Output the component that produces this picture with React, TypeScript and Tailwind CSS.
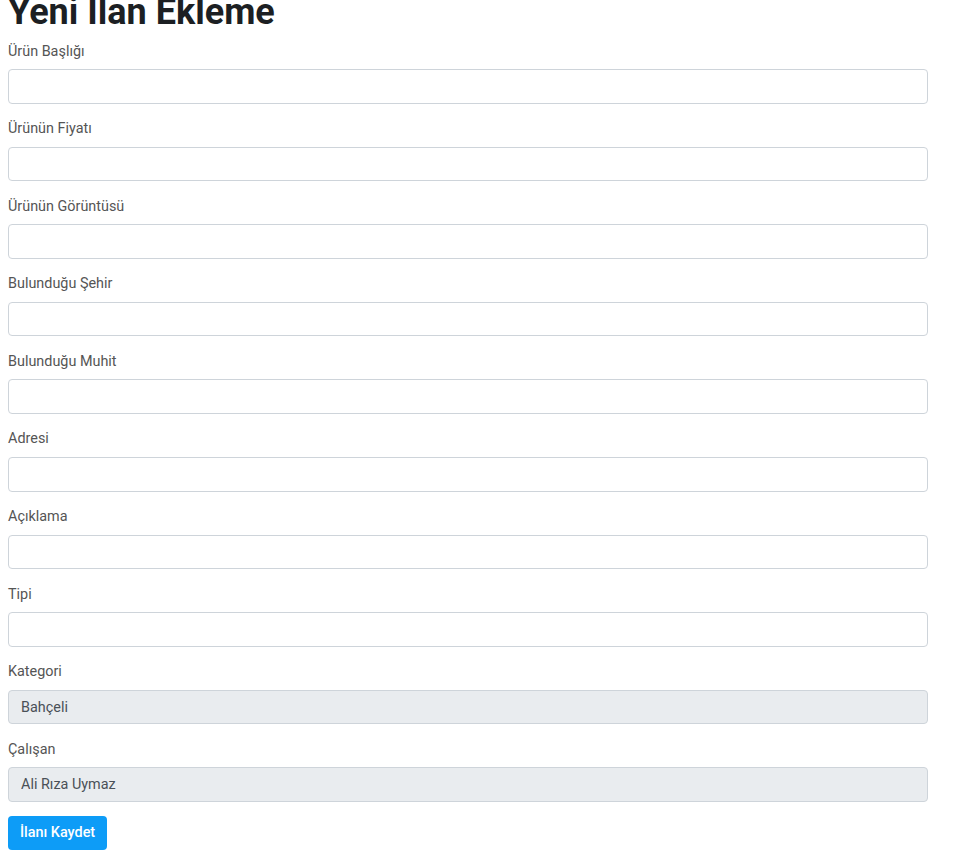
const fields: { label: string; value?: string }[] = [
  { label: "Ürün Başlığı" },
  { label: "Ürünün Fiyatı" },
  { label: "Ürünün Görüntüsü" },
  { label: "Bulunduğu Şehir" },
  { label: "Bulunduğu Muhit" },
  { label: "Adresi" },
  { label: "Açıklama" },
  { label: "Tipi" },
  { label: "Kategori", value: "Bahçeli" },
  { label: "Çalışan", value: "Ali Rıza Uymaz" },
];

export default function App() {
  return (
    <div className="min-h-screen bg-white font-['Roboto',sans-serif] overflow-hidden">
      <div className="w-[920px] ml-2">
        {/* Title */}
        <h1 className="text-[36px] leading-[43.2px] font-bold text-[#1c1f23] mt-[-9.5px] mb-[6.8px]">
          Yeni İlan Ekleme
        </h1>

        {/* Form */}
        <form>
          {fields.map((f) => (
            <div key={f.label} className="mb-[14.5px]">
              <label className="block text-[14.4px] leading-[21px] text-[#555] mb-[7.5px]">
                {f.label}
              </label>
              {f.value ? (
                <input
                  disabled
                  value={f.value}
                  readOnly
                  className="block w-full h-[34.6px] px-3 text-[14.4px] text-[#495057] bg-[#e9ecef] border border-[#ced4da] rounded-[4px]"
                />
              ) : (
                <input
                  type="text"
                  className="block w-full h-[34.6px] px-3 text-[14.4px] text-[#495057] bg-white border border-[#ced4da] rounded-[4px]"
                />
              )}
            </div>
          ))}
          <button
            type="button"
            className="h-[34px] px-3 text-[14.4px] font-medium text-white bg-[#0d9cf7] rounded-[4px] mt-[-0.5px]"
          >
            İlanı Kaydet
          </button>
        </form>
      </div>
    </div>
  );
}
